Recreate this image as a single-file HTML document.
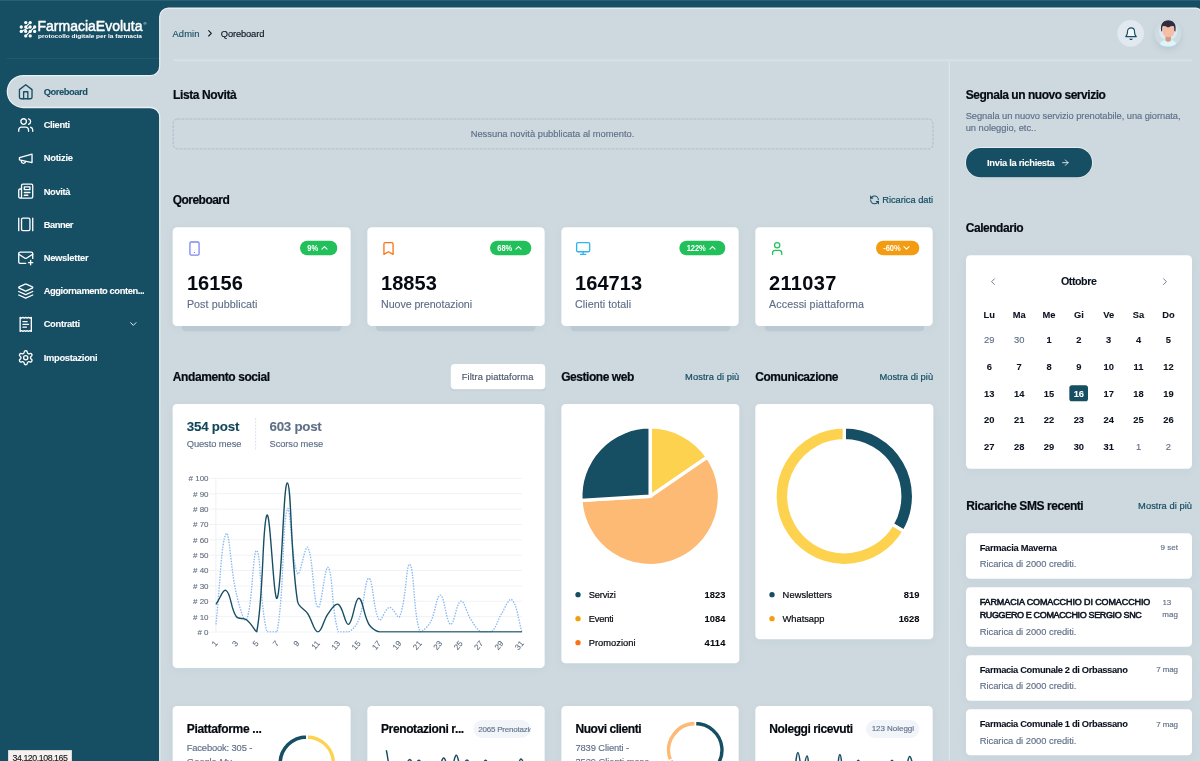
<!DOCTYPE html>
<html lang="it"><head><meta charset="utf-8"><title>Qoreboard - FarmaciaEvoluta</title>
<style>
*{box-sizing:border-box;margin:0;padding:0}
html,body{width:1200px;height:761px;overflow:hidden;background:#164e63}
body{font-family:"Liberation Sans",Arial,sans-serif;color:#0b1220}
#app{filter:opacity(1);position:absolute;left:0;top:0;width:1800px;height:1142px;transform:scale(.6666667);transform-origin:0 0;overflow:hidden;background:#164e63}
.abs,.card,.t,svg.ic{position:absolute}
svg.ic{display:block;overflow:visible}
.t{white-space:nowrap;font-weight:400;-webkit-text-stroke:.2px currentColor}
.t.m{font-weight:700;-webkit-text-stroke:.12px currentColor}
.t.ms{-webkit-text-stroke:.8px currentColor}
.t.m.h{-webkit-text-stroke:.3px currentColor}
.t.l{-webkit-text-stroke:.3px currentColor}
.t.m.big{-webkit-text-stroke:0}
.t.m.mid{-webkit-text-stroke:.15px currentColor}
.t.s2{-webkit-text-stroke:.2px currentColor}
.t.b{font-weight:700}
.t.b.bd{-webkit-text-stroke:0;letter-spacing:-.15px;transform:scaleX(.9);transform-origin:0 50%}
.card{background:#fff;border-radius:6.5px;box-shadow:0 3px 16px rgba(30,60,80,.035)}
.tick{font-size:12px;fill:#5f6b7e;stroke:#5f6b7e;stroke-width:.15px;font-family:"Liberation Sans",Arial,sans-serif}
</style></head>
<body>
<div id="app">
<svg class="abs" style="left:0;top:0" width="1800" height="1142" viewBox="0 0 1800 1142">
<rect x="0" y="0" width="1800" height="1.5" fill="#2a6076"/>
<path d="M1803 1160 V20.1 A9 9 0 0 0 1794 11.1 H252.6 A14 14 0 0 0 238.6 25.1 V99.4 A13 13 0 0 1 225.6 112.4 H34.9 A24.9 24.9 0 0 0 34.9 162.2 H225.6 A13 13 0 0 1 238.6 175.2 V1160 Z" fill="#eaf0f3"/>
<path d="M1801.1 1160 V20.1 A7.1 7.1 0 0 0 1794 13 H252.6 A12.1 12.1 0 0 0 240.5 25.1 V99.4 A14.9 14.9 0 0 1 225.6 114.3 H34.9 A23 23 0 0 0 34.9 160.3 H225.6 A14.9 14.9 0 0 1 240.5 175.2 V1160 Z" fill="#cdd9df"/>
</svg>
<svg class="abs" style="left:28px;top:27px;overflow:visible" width="200" height="36" viewBox="0 0 200 36">
<g fill="#fff">
<circle cx="10.6" cy="6.8" r="2.45"/><circle cx="17.300" cy="6.8" r="2.45"/>
<circle cx="3.9" cy="13.500" r="2.45"/><circle cx="10.6" cy="13.500" r="2.45"/><circle cx="17.300" cy="13.500" r="2.45"/><circle cx="24" cy="13.500" r="2.45"/>
<circle cx="3.9" cy="20.200" r="2.45"/><circle cx="10.6" cy="20.200" r="2.45"/><circle cx="17.300" cy="20.200" r="2.45"/><circle cx="24" cy="20.200" r="2.45"/>
<circle cx="10.6" cy="26.900" r="2.45"/><circle cx="17.300" cy="26.900" r="2.45"/>
</g>
<g stroke="#fff" stroke-width="1.7" stroke-linecap="round"><path d="M17.300 6.8 10.6 13.500M24 13.500 10.6 26.900M17.300 13.500 3.9 20.200"/></g>
<text x="28.300" y="20.200" fill="#fff" stroke="#fff" stroke-width=".75" stroke-linejoin="round" font-family="'Liberation Sans', Arial, sans-serif" font-size="22.6" textLength="157.500" lengthAdjust="spacingAndGlyphs">FarmaciaEvoluta</text>
<text x="187.200" y="10.300" fill="#fff" font-family="'Liberation Sans', Arial, sans-serif" font-size="6.500">®</text>
<text x="29" y="29.300" fill="#fff" font-family="'Liberation Sans', Arial, sans-serif" font-weight="700" font-size="8.9" textLength="156" lengthAdjust="spacingAndGlyphs">protocollo digitale per la farmacia</text>
</svg>
<div class="abs" style="left:10px;top:87.2px;width:229px;height:1.3px;background:rgba(255,255,255,.09)"></div>
<svg class="ic" style="left:25.5px;top:124.88px" width="25.2" height="25.2" viewBox="0 0 24 24" fill="none" stroke="#164e63" stroke-width="1.9" stroke-linecap="round" stroke-linejoin="round"><path d="m3 9 9-7 9 7v11a2 2 0 0 1-2 2H5a2 2 0 0 1-2-2z"/><path d="M9 22V12h6v10"/></svg>
<div class="t m" style="top:127.18px;font-size:14px;line-height:20px;color:#164e63;left:65.55px;letter-spacing:-0.65px;">Qoreboard</div>
<svg class="ic" style="left:25.5px;top:174.74px" width="25.2" height="25.2" viewBox="0 0 24 24" fill="none" stroke="#fff" stroke-width="1.9" stroke-linecap="round" stroke-linejoin="round"><path d="M16 21v-2a4 4 0 0 0-4-4H6a4 4 0 0 0-4 4v2"/><circle cx="9" cy="7" r="4"/><path d="M22 21v-2a4 4 0 0 0-3-3.87"/><path d="M16 3.13a4 4 0 0 1 0 7.75"/></svg>
<div class="t m" style="top:177.03px;font-size:14px;line-height:20px;color:#fff;left:65.55px;letter-spacing:-0.52px;">Clienti</div>
<svg class="ic" style="left:25.5px;top:224.59px" width="25.2" height="25.2" viewBox="0 0 24 24" fill="none" stroke="#fff" stroke-width="1.9" stroke-linecap="round" stroke-linejoin="round"><path d="m3 11 18-5v12L3 14v-3z"/><path d="M11.6 16.8a3 3 0 1 1-5.8-1.6"/></svg>
<div class="t m" style="top:226.9px;font-size:14px;line-height:20px;color:#fff;left:65.55px;letter-spacing:-0.32px;">Notizie</div>
<svg class="ic" style="left:25.5px;top:274.45px" width="25.2" height="25.2" viewBox="0 0 24 24" fill="none" stroke="#fff" stroke-width="1.9" stroke-linecap="round" stroke-linejoin="round"><path d="M4 22h16a2 2 0 0 0 2-2V4a2 2 0 0 0-2-2H8a2 2 0 0 0-2 2v16a2 2 0 0 1-2 2Zm0 0a2 2 0 0 1-2-2v-9c0-1.1.9-2 2-2h2"/><path d="M18 14h-8"/><path d="M15 18h-5"/><path d="M10 6h8v4h-8V6Z"/></svg>
<div class="t m" style="top:276.75px;font-size:14px;line-height:20px;color:#fff;left:65.55px;letter-spacing:-0.51px;">Novità</div>
<svg class="ic" style="left:25.5px;top:324.31px" width="25.2" height="25.2" viewBox="0 0 24 24" fill="none" stroke="#fff" stroke-width="1.9" stroke-linecap="round" stroke-linejoin="round"><path d="M2 3v18"/><rect width="12" height="18" x="6" y="3" rx="2"/><path d="M22 3v18"/></svg>
<div class="t m" style="top:326.62px;font-size:14px;line-height:20px;color:#fff;left:65.55px;letter-spacing:-0.71px;">Banner</div>
<svg class="ic" style="left:25.5px;top:374.18px" width="25.2" height="25.2" viewBox="0 0 24 24" fill="none" stroke="#fff" stroke-width="1.9" stroke-linecap="round" stroke-linejoin="round"><path d="M22 13V6a2 2 0 0 0-2-2H4a2 2 0 0 0-2 2v12c0 1.1.9 2 2 2h8"/><path d="m22 7-8.97 5.7a1.94 1.94 0 0 1-2.06 0L2 7"/><path d="M19 16v6"/><path d="M16 19h6"/></svg>
<div class="t m" style="top:376.48px;font-size:14px;line-height:20px;color:#fff;left:65.55px;letter-spacing:-0.39px;">Newsletter</div>
<svg class="ic" style="left:25.5px;top:424.03px" width="25.2" height="25.2" viewBox="0 0 24 24" fill="none" stroke="#fff" stroke-width="1.9" stroke-linecap="round" stroke-linejoin="round"><path d="m12.83 2.18a2 2 0 0 0-1.66 0L2.6 6.08a1 1 0 0 0 0 1.83l8.58 3.91a2 2 0 0 0 1.66 0l8.58-3.9a1 1 0 0 0 0-1.83Z"/><path d="m22 17.65-9.17 4.16a2 2 0 0 1-1.66 0L2 17.65"/><path d="m22 12.65-9.17 4.16a2 2 0 0 1-1.66 0L2 12.65"/></svg>
<div class="t m" style="top:426.33px;font-size:14px;line-height:20px;color:#fff;left:65.55px;letter-spacing:-0.61px;">Aggiornamento conten...</div>
<svg class="ic" style="left:25.5px;top:473.89px" width="25.2" height="25.2" viewBox="0 0 24 24" fill="none" stroke="#fff" stroke-width="1.9" stroke-linecap="round" stroke-linejoin="round"><path d="M4 2v20l2-1 2 1 2-1 2 1 2-1 2 1 2-1 2 1V2l-2 1-2-1-2 1-2-1-2 1-2-1-2 1Z"/><path d="M14 8H8"/><path d="M16 12H8"/><path d="M13 16H8"/></svg>
<div class="t m" style="top:476.19px;font-size:14px;line-height:20px;color:#fff;left:65.55px;letter-spacing:-0.48px;">Contratti</div>
<svg class="ic" style="left:191.95px;top:478.19px" width="16" height="16" viewBox="0 0 24 24" fill="none" stroke="#fff" stroke-width="2" stroke-linecap="round" stroke-linejoin="round"><path d="m6 9 6 6 6-6"/></svg>
<svg class="ic" style="left:25.5px;top:523.75px" width="25.2" height="25.2" viewBox="0 0 24 24" fill="none" stroke="#fff" stroke-width="1.9" stroke-linecap="round" stroke-linejoin="round"><path d="M12.22 2h-.44a2 2 0 0 0-2 2v.18a2 2 0 0 1-1 1.73l-.43.25a2 2 0 0 1-2 0l-.15-.08a2 2 0 0 0-2.73.73l-.22.38a2 2 0 0 0 .73 2.73l.15.1a2 2 0 0 1 1 1.72v.51a2 2 0 0 1-1 1.74l-.15.09a2 2 0 0 0-.73 2.73l.22.38a2 2 0 0 0 2.73.73l.15-.08a2 2 0 0 1 2 0l.43.25a2 2 0 0 1 1 1.73V20a2 2 0 0 0 2 2h.44a2 2 0 0 0 2-2v-.18a2 2 0 0 1 1-1.73l.43-.25a2 2 0 0 1 2 0l.15.08a2 2 0 0 0 2.73-.73l.22-.39a2 2 0 0 0-.73-2.73l-.15-.08a2 2 0 0 1-1-1.74v-.5a2 2 0 0 1 1-1.74l.15-.09a2 2 0 0 0 .73-2.73l-.22-.38a2 2 0 0 0-2.73-.73l-.15.08a2 2 0 0 1-2 0l-.43-.25a2 2 0 0 1-1-1.73V4a2 2 0 0 0-2-2z"/><circle cx="12" cy="12" r="3"/></svg>
<div class="t m" style="top:526.06px;font-size:14px;line-height:20px;color:#fff;left:65.55px;letter-spacing:-0.43px;">Impostazioni</div>
<div class="t" style="top:40.1px;font-size:14px;line-height:20px;color:#164e63;left:258.75px;letter-spacing:0.16px;">Admin</div>
<svg class="ic" style="left:307px;top:42.25px" width="16" height="16" viewBox="0 0 24 24" fill="none" stroke="#0f172a" stroke-width="2.4" stroke-linecap="round" stroke-linejoin="round"><path d="m9 18 6-6-6-6"/></svg>
<div class="t" style="top:40.1px;font-size:14px;line-height:20px;color:#0b1220;left:331.2px;letter-spacing:-0.2px;">Qoreboard</div>
<div class="abs" style="left:1676.25px;top:30px;width:40.01px;height:40.01px;border-radius:50%;background:#e2e8f0"></div>
<svg class="ic" style="left:1685.7px;top:39.75px" width="21" height="21" viewBox="0 0 24 24" fill="rgba(255,255,255,.6)" stroke="#164e63" stroke-width="1.9" stroke-linecap="round" stroke-linejoin="round"><path d="M6 8a6 6 0 0 1 12 0c0 7 3 9 3 9H3s3-2 3-9"/><path d="M10.3 21a1.94 1.94 0 0 0 3.4 0"/></svg>
<div class="abs" style="left:1731.77px;top:30px;width:40px;height:40px;border-radius:50%;box-shadow:0 5px 10px rgba(40,60,80,.1);overflow:hidden">
<svg width="40" height="40" viewBox="0 0 40 40" style="display:block"><rect width="40" height="40" fill="#cfdbe1"/><circle cx="20.300" cy="17" r="13.800" fill="#d9eaf1"/>
<path d="M6.500 40c.5-6.500 5-10.500 13.800-10.500s13.300 4 13.800 10.500z" fill="#d8f6fb"/>
<path d="M16.200 23.500h8.200v7.200c-2 2.700-6.200 2.700-8.200 0z" fill="#d9987c"/>
<path d="M11.900 7.500h17.500v10.200c0 10.800-17.500 10.800-17.500 0z" fill="#f3bda6"/>
<path d="M10 17.500C7.800 6 12.500.2 20.500.2S33.200 6 31 17.500l-1.700-1.500c.3-2.500.1-4.700-.6-6.700-2.400-.5-5-.2-7.200 1.400h-2.400c-2.200-1.600-4.800-1.900-7.200-1.400-.7 2-.9 4.200-.6 6.700z" fill="#2f2d3e"/>
</svg></div>
<div class="abs" style="left:259.500px;top:88.700px;width:1528.500px;height:3px;background:rgba(255,255,255,.2)"></div>
<div class="abs" style="left:1423.400px;top:91.700px;width:1.7px;height:1060px;background:rgba(255,255,255,.3)"></div>
<div class="t m h" style="top:128.9px;font-size:18px;line-height:26px;color:#060a12;left:259.5px;letter-spacing:-0.59px;">Lista Novità</div>
<svg class="abs" style="left:0;top:0" width="1800" height="1142" viewBox="0 0 1800 1142"><rect x="259.8" y="178.57" width="1139.7" height="44.85" rx="6.500" fill="none" stroke="#a6b6c6" stroke-width="1.2" stroke-dasharray="4.2 1.8"/></svg>
<div class="t" style="top:191px;font-size:14px;line-height:20px;color:#5e6e87;left:828.75px;transform:translateX(-50%);letter-spacing:0.01px;">Nessuna novità pubblicata al momento.</div>
<div class="t m h" style="top:286.7px;font-size:18px;line-height:26px;color:#060a12;left:259.2px;letter-spacing:-0.82px;">Qoreboard</div>
<svg class="ic" style="left:1303.55px;top:292.25px" width="15.5" height="15.5" viewBox="0 0 24 24" fill="none" stroke="#164e63" stroke-width="2.4" stroke-linecap="round" stroke-linejoin="round"><path d="M21 12a9 9 0 0 0-9-9 9.75 9.75 0 0 0-6.74 2.74L3 8"/><path d="M3 3v5h5"/><path d="M3 12a9 9 0 0 0 9 9 9.75 9.75 0 0 0 6.740-2.740L21 16"/><path d="M16 16h5v5"/></svg>
<div class="t l" style="top:290px;font-size:14px;line-height:20px;color:#164e63;right:400.41px;letter-spacing:-0.06px;">Ricarica dati</div>
<div class="abs" style="left:273.3px;top:450px;width:238.95px;height:46.95px;background:#bfccd5;border-radius:0 0 6px 6px"></div>
<div class="card" style="left:259.35px;top:340.5px;width:266.85px;height:148.8px;"></div>
<svg class="ic" style="left:280.3px;top:360.85px" width="23.5" height="23.5" viewBox="0 0 24 24" fill="none" stroke="#7b86f5" stroke-width="2" stroke-linecap="round" stroke-linejoin="round"><rect width="14" height="20" x="5" y="2" rx="2" ry="2"/><path d="M12 18h.01"/></svg>
<div class="abs" style="left:450px;top:361.2px;width:55.8px;height:21.45px;border-radius:11px;background:#22c05b"></div>
<div class="t b bd" style="top:363px;font-size:12.6px;line-height:18px;color:#fff;left:460.95px;">9%</div>
<svg class="ic" style="left:478.7px;top:364.17px" width="15.5" height="15.5" viewBox="0 0 24 24" fill="none" stroke="#fff" stroke-width="2.5" stroke-linecap="round" stroke-linejoin="round"><path d="m18 15-6-6-6 6"/></svg>
<div class="t m big" style="top:408.65px;font-size:30px;line-height:32px;color:#060a12;left:280.35px;letter-spacing:0.11px;">16156</div>
<div class="t" style="top:445.4px;font-size:16px;line-height:23px;color:#5e6e87;left:280.35px;letter-spacing:0.13px;">Post pubblicati</div>
<div class="abs" style="left:564.45px;top:450px;width:238.95px;height:46.95px;background:#bfccd5;border-radius:0 0 6px 6px"></div>
<div class="card" style="left:550.5px;top:340.5px;width:266.85px;height:148.8px;"></div>
<svg class="ic" style="left:571.45px;top:360.85px" width="23.5" height="23.5" viewBox="0 0 24 24" fill="none" stroke="#f97316" stroke-width="2" stroke-linecap="round" stroke-linejoin="round"><path d="m19 21-7-4-7 4V5a2 2 0 0 1 2-2h10a2 2 0 0 1 2 2v16z"/></svg>
<div class="abs" style="left:734.55px;top:361.2px;width:62.4px;height:21.45px;border-radius:11px;background:#22c05b"></div>
<div class="t b bd" style="top:363px;font-size:12.6px;line-height:18px;color:#fff;left:745.5px;">68%</div>
<svg class="ic" style="left:769.85px;top:364.17px" width="15.5" height="15.5" viewBox="0 0 24 24" fill="none" stroke="#fff" stroke-width="2.5" stroke-linecap="round" stroke-linejoin="round"><path d="m18 15-6-6-6 6"/></svg>
<div class="t m big" style="top:408.65px;font-size:30px;line-height:32px;color:#060a12;left:571.5px;letter-spacing:0.05px;">18853</div>
<div class="t" style="top:445.4px;font-size:16px;line-height:23px;color:#5e6e87;left:571.5px;letter-spacing:-0.08px;">Nuove prenotazioni</div>
<div class="abs" style="left:855.6px;top:450px;width:238.95px;height:46.95px;background:#bfccd5;border-radius:0 0 6px 6px"></div>
<div class="card" style="left:841.65px;top:340.5px;width:266.85px;height:148.8px;"></div>
<svg class="ic" style="left:862.6px;top:360.85px" width="23.5" height="23.5" viewBox="0 0 24 24" fill="none" stroke="#2fb4f0" stroke-width="2" stroke-linecap="round" stroke-linejoin="round"><rect width="20" height="14" x="2" y="3" rx="2"/><line x1="8" x2="16" y1="21" y2="21"/><line x1="12" x2="12" y1="17" y2="21"/></svg>
<div class="abs" style="left:1018.8px;top:361.2px;width:69.3px;height:21.45px;border-radius:11px;background:#22c05b"></div>
<div class="t b bd" style="top:363px;font-size:12.6px;line-height:18px;color:#fff;left:1029.75px;">122%</div>
<svg class="ic" style="left:1061px;top:364.17px" width="15.5" height="15.5" viewBox="0 0 24 24" fill="none" stroke="#fff" stroke-width="2.5" stroke-linecap="round" stroke-linejoin="round"><path d="m18 15-6-6-6 6"/></svg>
<div class="t m big" style="top:408.65px;font-size:30px;line-height:32px;color:#060a12;left:862.65px;letter-spacing:0.07px;">164713</div>
<div class="t" style="top:445.4px;font-size:16px;line-height:23px;color:#5e6e87;left:862.65px;letter-spacing:0.09px;">Clienti totali</div>
<div class="abs" style="left:1146.6px;top:450px;width:238.95px;height:46.95px;background:#bfccd5;border-radius:0 0 6px 6px"></div>
<div class="card" style="left:1132.65px;top:340.5px;width:266.85px;height:148.8px;"></div>
<svg class="ic" style="left:1153.6px;top:360.85px" width="23.5" height="23.5" viewBox="0 0 24 24" fill="none" stroke="#22c55e" stroke-width="2" stroke-linecap="round" stroke-linejoin="round"><path d="M19 21v-2a4 4 0 0 0-4-4H9a4 4 0 0 0-4 4v2"/><circle cx="12" cy="7" r="4"/></svg>
<div class="abs" style="left:1313.7px;top:361.2px;width:65.4px;height:21.45px;border-radius:11px;background:#f39c12"></div>
<div class="t b bd" style="top:363px;font-size:12.6px;line-height:18px;color:#fff;left:1324.65px;">-60%</div>
<svg class="ic" style="left:1352px;top:364.17px" width="15.5" height="15.5" viewBox="0 0 24 24" fill="none" stroke="#fff" stroke-width="2.5" stroke-linecap="round" stroke-linejoin="round"><path d="m6 9 6 6 6-6"/></svg>
<div class="t m big" style="top:408.65px;font-size:30px;line-height:32px;color:#060a12;left:1153.65px;letter-spacing:0.47px;">211037</div>
<div class="t" style="top:445.4px;font-size:16px;line-height:23px;color:#5e6e87;left:1153.65px;letter-spacing:0.15px;">Accessi piattaforma</div>
<div class="t m h" style="top:552.05px;font-size:18px;line-height:26px;color:#060a12;left:259.2px;letter-spacing:-0.6px;">Andamento social</div>
<div class="abs" style="left:675.75px;top:546px;width:141.75px;height:38.4px;background:#fff;border-radius:6px;box-shadow:0 1px 2px rgba(0,0,0,.04)"></div>
<div class="t s2" style="top:555.12px;font-size:14px;line-height:20px;color:#475569;left:692.62px;letter-spacing:0.14px;">Filtra piattaforma</div>
<div class="t m h" style="top:552.05px;font-size:18px;line-height:26px;color:#060a12;left:841.88px;letter-spacing:-0.69px;">Gestione web</div>
<div class="t l" style="top:555.2px;font-size:14px;line-height:20px;color:#164e63;right:690.95px;letter-spacing:0.1px;">Mostra di più</div>
<div class="t m h" style="top:552.05px;font-size:18px;line-height:26px;color:#060a12;left:1132.8px;letter-spacing:-0.68px;">Comunicazione</div>
<div class="t l" style="top:555.2px;font-size:14px;line-height:20px;color:#164e63;right:400.32px;letter-spacing:0.03px;">Mostra di più</div>
<div class="card" style="left:259.35px;top:606px;width:557.85px;height:396px;"></div>
<div class="card" style="left:841.65px;top:606px;width:267px;height:388.95px;"></div>
<div class="card" style="left:1132.65px;top:606px;width:267px;height:353.25px;"></div>
<div class="t m mid" style="top:625.7px;font-size:20px;line-height:29px;color:#11465a;left:280.05px;letter-spacing:-0.3px;">354 post</div>
<div class="t" style="top:656.15px;font-size:14px;line-height:20px;color:#5e6e87;left:280.05px;letter-spacing:-0.11px;">Questo mese</div>
<div class="abs" style="left:382.5px;top:626.55px;width:0;height:47.25px;border-left:1.4px dashed #c5d2e2"></div>
<div class="t m mid" style="top:625.7px;font-size:20px;line-height:29px;color:#5e6e87;left:404.25px;letter-spacing:-0.39px;">603 post</div>
<div class="t" style="top:656.15px;font-size:14px;line-height:20px;color:#5e6e87;left:404.25px;letter-spacing:-0.12px;">Scorso mese</div>
<div class="card" style="left:259.35px;top:1059px;width:266.85px;height:126px;"></div>
<div class="card" style="left:550.5px;top:1059px;width:266.85px;height:126px;"></div>
<div class="card" style="left:841.65px;top:1059px;width:266.85px;height:126px;"></div>
<div class="card" style="left:1132.65px;top:1059px;width:266.85px;height:126px;"></div>
<svg class="abs" style="left:0;top:0" width="1800" height="1142" viewBox="0 0 1800 1142"><line x1="314.85" y1="948" x2="783" y2="948" stroke="#f1f2f5" stroke-width="1.5"/>
<text x="312.85" y="952.3" text-anchor="end" class="tick"># 0</text>
<line x1="314.85" y1="924.95" x2="783" y2="924.95" stroke="#f1f2f5" stroke-width="1.5"/>
<text x="312.85" y="929.25" text-anchor="end" class="tick"># 10</text>
<line x1="314.85" y1="901.9" x2="783" y2="901.9" stroke="#f1f2f5" stroke-width="1.5"/>
<text x="312.85" y="906.2" text-anchor="end" class="tick"># 20</text>
<line x1="314.85" y1="878.86" x2="783" y2="878.86" stroke="#f1f2f5" stroke-width="1.5"/>
<text x="312.85" y="883.16" text-anchor="end" class="tick"># 30</text>
<line x1="314.85" y1="855.81" x2="783" y2="855.81" stroke="#f1f2f5" stroke-width="1.5"/>
<text x="312.85" y="860.11" text-anchor="end" class="tick"># 40</text>
<line x1="314.85" y1="832.76" x2="783" y2="832.76" stroke="#f1f2f5" stroke-width="1.5"/>
<text x="312.85" y="837.06" text-anchor="end" class="tick"># 50</text>
<line x1="314.85" y1="809.72" x2="783" y2="809.72" stroke="#f1f2f5" stroke-width="1.5"/>
<text x="312.85" y="814.01" text-anchor="end" class="tick"># 60</text>
<line x1="314.85" y1="786.67" x2="783" y2="786.67" stroke="#f1f2f5" stroke-width="1.5"/>
<text x="312.85" y="790.97" text-anchor="end" class="tick"># 70</text>
<line x1="314.85" y1="763.62" x2="783" y2="763.62" stroke="#f1f2f5" stroke-width="1.5"/>
<text x="312.85" y="767.92" text-anchor="end" class="tick"># 80</text>
<line x1="314.85" y1="740.57" x2="783" y2="740.57" stroke="#f1f2f5" stroke-width="1.5"/>
<text x="312.85" y="744.87" text-anchor="end" class="tick"># 90</text>
<line x1="314.85" y1="717.53" x2="783" y2="717.53" stroke="#f1f2f5" stroke-width="1.5"/>
<text x="312.85" y="721.83" text-anchor="end" class="tick"># 100</text>
<line x1="323.85" y1="717.53" x2="323.85" y2="948" stroke="#eef0f3" stroke-width="1.5"/>
<text transform="translate(327.35 965.5) rotate(-50)" text-anchor="end" class="tick">1</text>
<text transform="translate(357.96 965.5) rotate(-50)" text-anchor="end" class="tick">3</text>
<text transform="translate(388.57 965.5) rotate(-50)" text-anchor="end" class="tick">5</text>
<text transform="translate(419.18 965.5) rotate(-50)" text-anchor="end" class="tick">7</text>
<text transform="translate(449.79 965.5) rotate(-50)" text-anchor="end" class="tick">9</text>
<text transform="translate(480.4 965.5) rotate(-50)" text-anchor="end" class="tick">11</text>
<text transform="translate(511.01 965.5) rotate(-50)" text-anchor="end" class="tick">13</text>
<text transform="translate(541.62 965.5) rotate(-50)" text-anchor="end" class="tick">15</text>
<text transform="translate(572.23 965.5) rotate(-50)" text-anchor="end" class="tick">17</text>
<text transform="translate(602.84 965.5) rotate(-50)" text-anchor="end" class="tick">19</text>
<text transform="translate(633.45 965.5) rotate(-50)" text-anchor="end" class="tick">21</text>
<text transform="translate(664.06 965.5) rotate(-50)" text-anchor="end" class="tick">23</text>
<text transform="translate(694.67 965.5) rotate(-50)" text-anchor="end" class="tick">25</text>
<text transform="translate(725.28 965.5) rotate(-50)" text-anchor="end" class="tick">27</text>
<text transform="translate(755.89 965.5) rotate(-50)" text-anchor="end" class="tick">29</text>
<text transform="translate(786.5 965.5) rotate(-50)" text-anchor="end" class="tick">31</text>
<clipPath id="ca"><rect x="322.85" y="715.53" width="461.15" height="233.17"/></clipPath>
<g clip-path="url(#ca)">
<path d="M323.85 936.48 C329.97 882.08 331.81 811.56 339.16 800.50 C344.05 793.12 346.08 855.05 354.46 890.38 C358.33 906.68 366.26 936.95 369.76 929.56 C378.50 911.14 379.44 822.46 385.07 825.85 C391.68 829.83 389.48 904.54 400.38 948.00 C401.73 948.00 414.74 948.00 415.68 948.00 C426.99 879.88 422.98 786.52 430.99 763.62 C435.22 751.49 437.72 844.29 446.29 860.42 C449.97 867.34 457.73 814.84 461.60 821.24 C469.97 835.12 469.60 903.98 476.90 911.12 C481.85 915.97 487.47 845.49 492.21 851.20 C499.71 860.24 496.92 914.51 507.51 948.00 C509.16 948.00 518.04 948.00 522.82 948.00 C530.29 943.50 534.79 938.34 538.12 929.56 C547.03 906.08 547.30 867.33 553.42 867.33 C559.55 867.33 559.82 916.81 568.73 929.56 C572.06 934.33 577.46 912.11 584.04 911.12 C589.70 910.27 596.83 930.25 599.34 924.95 C609.07 904.44 609.29 842.56 614.64 846.59 C621.53 851.77 619.76 918.83 629.95 948.00 C632.00 948.00 641.36 941.21 645.25 934.17 C653.60 919.08 654.58 892.24 660.56 892.69 C666.83 893.16 669.12 934.44 675.87 936.48 C681.36 938.13 684.50 903.41 691.17 901.90 C696.75 900.65 699.51 919.07 706.48 929.56 C711.75 937.51 714.31 943.50 721.78 948.00 C726.55 948.00 733.09 948.00 737.09 948.00 C745.33 940.55 745.65 931.01 752.39 920.34 C757.89 911.65 763.57 895.87 767.69 899.60 C775.82 906.94 776.88 928.64 783.00 948.00" fill="none" stroke="#86b8f1" stroke-width="2" stroke-dasharray="2.2 1.9"/>
<path d="M323.85 906.51 C329.97 898.22 334.50 882.97 339.16 885.77 C346.75 890.34 345.59 912.26 354.46 924.95 C357.83 929.78 364.87 925.87 369.76 929.56 C377.11 935.09 383.60 948.00 385.07 948.00 C395.85 892.83 393.23 784.68 400.38 772.84 C405.47 764.40 410.54 905.42 415.68 897.30 C422.79 886.06 424.94 723.53 430.99 724.44 C437.19 725.37 435.50 832.84 446.29 901.90 C447.74 911.20 456.32 912.39 461.60 920.34 C468.56 930.83 470.78 948.00 476.90 948.00 C483.02 948.00 484.80 930.38 492.21 920.34 C497.04 913.79 502.86 904.06 507.51 906.51 C515.10 910.52 517.37 938.12 522.82 936.48 C529.62 934.43 532.00 897.30 538.12 897.30 C544.24 897.30 545.01 922.54 553.42 936.48 C557.26 942.82 561.92 945.44 568.73 948.00 C574.17 948.00 577.91 948.00 584.04 948.00 C590.16 948.00 593.22 948.00 599.34 948.00 C605.46 948.00 608.52 948.00 614.64 948.00 C620.77 948.00 623.83 948.00 629.95 948.00 C636.07 948.00 639.13 948.00 645.25 948.00 C651.38 948.00 654.44 948.00 660.56 948.00 C666.68 948.00 669.74 948.00 675.87 948.00 C681.99 948.00 685.05 948.00 691.17 948.00 C697.29 948.00 700.35 948.00 706.48 948.00 C712.60 948.00 715.66 948.00 721.78 948.00 C727.90 948.00 730.96 948.00 737.09 948.00 C743.21 948.00 746.27 948.00 752.39 948.00 C758.51 948.00 761.57 948.00 767.69 948.00 C773.82 948.00 776.88 948.00 783.00 948.00" fill="none" stroke="#164e63" stroke-width="2.1" stroke-linejoin="round"/>
</g>
<path d="M975.22 744.38 L975.22 640.38 A104.00 104.00 0 0 1 1061.02 685.59 Z" fill="#fcd24f" stroke="#fff" stroke-width="5" stroke-linejoin="miter"/>
<path d="M975.22 744.38 L1061.02 685.59 A104.00 104.00 0 1 1 871.42 750.68 Z" fill="#fdba74" stroke="#fff" stroke-width="5" stroke-linejoin="miter"/>
<path d="M975.22 744.38 L871.42 750.68 A104.00 104.00 0 0 1 975.22 640.38 Z" fill="#164e63" stroke="#fff" stroke-width="5" stroke-linejoin="miter"/>
<path d="M1266.45 640.38 A104.00 104.00 0 0 1 1356.07 797.14 L1338.14 786.59 A83.20 83.20 0 0 0 1266.45 661.17 Z" fill="#164e63" stroke="#fff" stroke-width="5" stroke-linejoin="miter"/>
<path d="M1356.07 797.14 A104.00 104.00 0 1 1 1266.45 640.38 L1266.45 661.17 A83.20 83.20 0 1 0 1338.14 786.59 Z" fill="#fcd24f" stroke="#fff" stroke-width="5" stroke-linejoin="miter"/>
<path d="M460.35 1101.60 A43.80 43.80 0 1 1 459.21 1189.19 L459.41 1181.59 A36.20 36.20 0 1 0 460.35 1109.20 Z" fill="#fcd24f" stroke="#fff" stroke-width="2.5" stroke-linejoin="miter"/>
<path d="M459.21 1189.19 A43.80 43.80 0 0 1 460.35 1101.60 L460.35 1109.20 A36.20 36.20 0 0 0 459.41 1181.59 Z" fill="#164e63" stroke="#fff" stroke-width="2.5" stroke-linejoin="miter"/>
<path d="M1042.95 1081.50 A43.80 43.80 0 1 1 1002.27 1141.53 L1009.33 1138.72 A36.20 36.20 0 1 0 1042.95 1089.10 Z" fill="#164e63" stroke="#fff" stroke-width="2.5" stroke-linejoin="miter"/>
<path d="M1002.27 1141.53 A43.80 43.80 0 0 1 1042.95 1081.50 L1042.95 1089.10 A36.20 36.20 0 0 0 1009.33 1138.72 Z" fill="#fdba74" stroke="#fff" stroke-width="2.5" stroke-linejoin="miter"/>
<path d="M579.45 1125.45 C582.39 1136.67 581.15 1145.79 586.80 1153.50 C589.37 1157.01 595.02 1154.58 600.00 1153.50 C603.30 1152.78 605.05 1151.40 607.50 1149.00 C610.87 1145.70 611.58 1139.57 614.55 1139.25 C617.22 1138.97 618.68 1147.25 621.60 1147.50 C624.26 1147.73 625.96 1139.92 628.50 1140.45 C631.72 1141.12 631.95 1148.15 636.00 1150.50 C640.95 1153.37 645.11 1153.50 651.00 1153.50 C654.11 1153.50 656.47 1152.78 658.50 1150.50 C662.29 1146.24 662.71 1137.15 665.55 1137.15 C668.41 1137.15 669.09 1147.01 672.75 1150.50 C674.07 1151.75 676.88 1150.69 678.00 1149.00 C681.56 1143.61 681.77 1132.80 684.45 1132.80 C687.17 1132.80 687.76 1147.29 691.50 1149.00 C694.18 1150.23 697.06 1140.15 700.50 1140.15 C703.66 1140.15 704.12 1147.36 708.00 1149.00 C712.52 1150.90 716.99 1150.88 721.50 1149.00 C725.21 1147.46 725.86 1140.17 728.55 1140.45 C731.56 1140.77 731.58 1148.62 735.75 1150.50 C743.16 1153.84 748.78 1153.16 757.50 1153.50 C764.08 1153.76 769.05 1155.12 774.00 1152.00 C778.65 1149.06 778.50 1138.35 781.50 1138.35 C784.50 1138.35 784.98 1147.94 789.00 1152.00 C790.98 1154.00 793.50 1152.90 796.50 1153.50" fill="none" stroke="#164e63" stroke-width="2.2"/>
<path d="M1182.00 1158.00 C1185.18 1158.00 1188.71 1160.45 1189.95 1158.00 C1194.65 1148.75 1194.09 1128.75 1196.85 1128.75 C1199.61 1128.75 1200.76 1156.82 1203.75 1158.00 C1206.22 1158.98 1207.77 1134.15 1210.50 1134.15 C1213.23 1134.15 1211.43 1152.73 1217.40 1158.00 C1222.23 1162.27 1229.46 1158.00 1237.50 1158.00 C1243.68 1158.00 1249.71 1161.81 1252.95 1158.00 C1258.65 1151.31 1257.09 1131.75 1259.85 1131.75 C1262.61 1131.75 1261.42 1152.79 1266.75 1158.00 C1269.70 1160.89 1276.20 1155.72 1280.55 1152.00 C1284.48 1148.64 1284.69 1140.30 1287.45 1140.30 C1290.21 1140.30 1289.86 1149.97 1294.35 1152.00 C1302.88 1155.85 1309.83 1155.00 1320.00 1155.00 C1324.53 1155.00 1327.80 1154.70 1331.10 1152.00 C1335.00 1148.82 1335.24 1140.30 1338.00 1140.30 C1340.76 1140.30 1340.85 1149.57 1344.90 1152.00 C1348.65 1154.25 1354.33 1154.78 1357.50 1152.00 C1362.19 1147.88 1361.76 1134.75 1364.55 1134.75 C1367.34 1134.75 1367.49 1146.05 1371.45 1152.00 C1373.67 1155.35 1376.58 1155.60 1380.00 1158.00" fill="none" stroke="#164e63" stroke-width="2.2"/></svg>
<div class="abs" style="left:862.65px;top:887.93px;width:8.1px;height:8.1px;border-radius:50%;background:#164e63"></div>
<div class="t l" style="top:881.9px;font-size:14px;line-height:20px;color:#05080f;left:883.05px;letter-spacing:-0.24px;">Servizi</div>
<div class="t m" style="top:881.9px;font-size:14px;line-height:20px;color:#05080f;right:711.78px;letter-spacing:0.12px;">1823</div>
<div class="abs" style="left:862.65px;top:923.85px;width:8.1px;height:8.1px;border-radius:50%;background:#f59e0b"></div>
<div class="t l" style="top:917.82px;font-size:14px;line-height:20px;color:#05080f;left:883.05px;letter-spacing:-0.31px;">Eventi</div>
<div class="t m" style="top:917.82px;font-size:14px;line-height:20px;color:#05080f;right:711.78px;letter-spacing:0.12px;">1084</div>
<div class="abs" style="left:862.65px;top:959.78px;width:8.1px;height:8.1px;border-radius:50%;background:#f97316"></div>
<div class="t l" style="top:953.75px;font-size:14px;line-height:20px;color:#05080f;left:883.05px;letter-spacing:0.02px;">Promozioni</div>
<div class="t m" style="top:953.75px;font-size:14px;line-height:20px;color:#05080f;right:711.58px;letter-spacing:0.32px;">4114</div>
<div class="abs" style="left:1153.5px;top:887.93px;width:8.1px;height:8.1px;border-radius:50%;background:#164e63"></div>
<div class="t l" style="top:881.9px;font-size:14px;line-height:20px;color:#05080f;left:1173.9px;letter-spacing:0.1px;">Newsletters</div>
<div class="t m" style="top:881.9px;font-size:14px;line-height:20px;color:#05080f;right:420.79px;letter-spacing:0.11px;">819</div>
<div class="abs" style="left:1153.5px;top:923.85px;width:8.1px;height:8.1px;border-radius:50%;background:#f59e0b"></div>
<div class="t l" style="top:917.82px;font-size:14px;line-height:20px;color:#05080f;left:1173.9px;letter-spacing:-0.06px;">Whatsapp</div>
<div class="t m" style="top:917.82px;font-size:14px;line-height:20px;color:#05080f;right:420.89px;letter-spacing:0.01px;">1628</div>
<div class="t m h" style="top:1080.35px;font-size:18px;line-height:26px;color:#060a12;left:280.05px;letter-spacing:-0.46px;">Piattaforme ...</div>
<div class="t" style="top:1111.4px;font-size:14px;line-height:20px;color:#5e6e87;left:280.05px;letter-spacing:-0.2px;">Facebook: 305 -</div>
<div class="t" style="top:1131.5px;font-size:14px;line-height:20px;color:#5e6e87;left:280.05px;">Google My</div>
<div class="t m h" style="top:1080.35px;font-size:18px;line-height:26px;color:#060a12;left:571.5px;letter-spacing:-0.58px;">Prenotazioni r...</div>
<div class="abs" style="left:709.65px;top:1080px;width:86.85px;height:27px;border-radius:14px;background:#f1f5f9;overflow:hidden"><div class="t" style="left:7.8px;top:4.5px;font-size:12px;line-height:18px;color:#64748b;letter-spacing:-.32px">2065 Prenotazioni</div></div>
<div class="t m h" style="top:1080.35px;font-size:18px;line-height:26px;color:#060a12;left:863.1px;letter-spacing:-0.65px;">Nuovi clienti</div>
<div class="t" style="top:1111.4px;font-size:14px;line-height:20px;color:#5e6e87;left:863.1px;letter-spacing:-0.14px;">7839 Clienti -</div>
<div class="t" style="top:1131.5px;font-size:14px;line-height:20px;color:#5e6e87;left:863.1px;letter-spacing:-0.07px;">3529 Clienti mese</div>
<div class="t m h" style="top:1080.35px;font-size:18px;line-height:26px;color:#060a12;left:1153.95px;letter-spacing:-0.62px;">Noleggi ricevuti</div>
<div class="abs" style="left:1299px;top:1080px;width:79.65px;height:27px;border-radius:14px;background:#f1f5f9"></div>
<div class="t" style="top:1085px;font-size:12px;line-height:17px;color:#5e6e87;left:1307.55px;letter-spacing:-0.06px;">123 Noleggi</div>
<div class="t m h" style="top:129.2px;font-size:18px;line-height:26px;color:#060a12;left:1448.55px;letter-spacing:-0.7px;">Segnala un nuovo servizio</div>
<div class="t" style="top:162.5px;font-size:14px;line-height:20px;color:#5e6e87;left:1448.55px;letter-spacing:-0.09px;">Segnala un nuovo servizio prenotabile, una giornata,</div>
<div class="t" style="top:182.3px;font-size:14px;line-height:20px;color:#5e6e87;left:1448.55px;letter-spacing:-0.05px;">un noleggio, etc..</div>
<div class="abs" style="left:1448.55px;top:222.15px;width:189.9px;height:44.25px;border-radius:23px;background:#164e63;box-shadow:0 0 0 1.4px rgba(255,255,255,.5),0 2px 3px rgba(0,0,0,.06)"></div>
<div class="t m" style="top:234.12px;font-size:14px;line-height:20px;color:#fff;left:1480.5px;letter-spacing:-0.43px;">Invia la richiesta</div>
<svg class="ic" style="left:1591.4px;top:237.35px" width="14" height="14" viewBox="0 0 24 24" fill="none" stroke="#fff" stroke-width="2.1" stroke-linecap="round" stroke-linejoin="round"><path d="M5 12h14"/><path d="m12 5 7 7-7 7"/></svg>
<div class="t m h" style="top:329px;font-size:18px;line-height:26px;color:#060a12;left:1448.55px;letter-spacing:-0.68px;">Calendario</div>
<div class="card" style="left:1449.45px;top:382.5px;width:338.55px;height:320.4px;"></div>
<svg class="ic" style="left:1481px;top:414.2px" width="17" height="17" viewBox="0 0 24 24" fill="none" stroke="#5e6e87" stroke-width="1.9" stroke-linecap="round" stroke-linejoin="round"><path d="m15 18-6-6 6-6"/></svg>
<svg class="ic" style="left:1738.55px;top:414.2px" width="17" height="17" viewBox="0 0 24 24" fill="none" stroke="#5e6e87" stroke-width="1.9" stroke-linecap="round" stroke-linejoin="round"><path d="m9 18 6-6-6-6"/></svg>
<div class="t m" style="top:411.35px;font-size:16px;line-height:23px;color:#0b1220;left:1618.03px;transform:translateX(-50%);letter-spacing:-0.65px;">Ottobre</div>
<div class="t m" style="top:462.2px;font-size:14px;line-height:20px;color:#0b1220;left:1483.95px;transform:translateX(-50%);">Lu</div>
<div class="t m" style="top:462.2px;font-size:14px;line-height:20px;color:#0b1220;left:1528.72px;transform:translateX(-50%);">Ma</div>
<div class="t m" style="top:462.2px;font-size:14px;line-height:20px;color:#0b1220;left:1573.5px;transform:translateX(-50%);">Me</div>
<div class="t m" style="top:462.2px;font-size:14px;line-height:20px;color:#0b1220;left:1618.27px;transform:translateX(-50%);">Gi</div>
<div class="t m" style="top:462.2px;font-size:14px;line-height:20px;color:#0b1220;left:1663.05px;transform:translateX(-50%);">Ve</div>
<div class="t m" style="top:462.2px;font-size:14px;line-height:20px;color:#0b1220;left:1707.82px;transform:translateX(-50%);">Sa</div>
<div class="t m" style="top:462.2px;font-size:14px;line-height:20px;color:#0b1220;left:1752.6px;transform:translateX(-50%);">Do</div>
<div class="abs" style="left:1604.25px;top:578.25px;width:28.2px;height:23.85px;border-radius:4px;background:#164e63"></div>
<div class="t" style="top:500px;font-size:14px;line-height:20px;color:#5e6e87;left:1483.95px;transform:translateX(-50%);">29</div>
<div class="t" style="top:500px;font-size:14px;line-height:20px;color:#5e6e87;left:1528.72px;transform:translateX(-50%);">30</div>
<div class="t m" style="top:500px;font-size:14px;line-height:20px;color:#0b1220;left:1573.5px;transform:translateX(-50%);">1</div>
<div class="t m" style="top:500px;font-size:14px;line-height:20px;color:#0b1220;left:1618.27px;transform:translateX(-50%);">2</div>
<div class="t m" style="top:500px;font-size:14px;line-height:20px;color:#0b1220;left:1663.05px;transform:translateX(-50%);">3</div>
<div class="t m" style="top:500px;font-size:14px;line-height:20px;color:#0b1220;left:1707.82px;transform:translateX(-50%);">4</div>
<div class="t m" style="top:500px;font-size:14px;line-height:20px;color:#0b1220;left:1752.6px;transform:translateX(-50%);">5</div>
<div class="t m" style="top:539.9px;font-size:14px;line-height:20px;color:#0b1220;left:1483.95px;transform:translateX(-50%);">6</div>
<div class="t m" style="top:539.9px;font-size:14px;line-height:20px;color:#0b1220;left:1528.72px;transform:translateX(-50%);">7</div>
<div class="t m" style="top:539.9px;font-size:14px;line-height:20px;color:#0b1220;left:1573.5px;transform:translateX(-50%);">8</div>
<div class="t m" style="top:539.9px;font-size:14px;line-height:20px;color:#0b1220;left:1618.27px;transform:translateX(-50%);">9</div>
<div class="t m" style="top:539.9px;font-size:14px;line-height:20px;color:#0b1220;left:1663.05px;transform:translateX(-50%);">10</div>
<div class="t m" style="top:539.9px;font-size:14px;line-height:20px;color:#0b1220;left:1707.82px;transform:translateX(-50%);">11</div>
<div class="t m" style="top:539.9px;font-size:14px;line-height:20px;color:#0b1220;left:1752.6px;transform:translateX(-50%);">12</div>
<div class="t m" style="top:579.8px;font-size:14px;line-height:20px;color:#0b1220;left:1483.95px;transform:translateX(-50%);">13</div>
<div class="t m" style="top:579.8px;font-size:14px;line-height:20px;color:#0b1220;left:1528.72px;transform:translateX(-50%);">14</div>
<div class="t m" style="top:579.8px;font-size:14px;line-height:20px;color:#0b1220;left:1573.5px;transform:translateX(-50%);">15</div>
<div class="t m" style="top:579.8px;font-size:14px;line-height:20px;color:#fff;left:1618.27px;transform:translateX(-50%);">16</div>
<div class="t m" style="top:579.8px;font-size:14px;line-height:20px;color:#0b1220;left:1663.05px;transform:translateX(-50%);">17</div>
<div class="t m" style="top:579.8px;font-size:14px;line-height:20px;color:#0b1220;left:1707.82px;transform:translateX(-50%);">18</div>
<div class="t m" style="top:579.8px;font-size:14px;line-height:20px;color:#0b1220;left:1752.6px;transform:translateX(-50%);">19</div>
<div class="t m" style="top:619.7px;font-size:14px;line-height:20px;color:#0b1220;left:1483.95px;transform:translateX(-50%);">20</div>
<div class="t m" style="top:619.7px;font-size:14px;line-height:20px;color:#0b1220;left:1528.72px;transform:translateX(-50%);">21</div>
<div class="t m" style="top:619.7px;font-size:14px;line-height:20px;color:#0b1220;left:1573.5px;transform:translateX(-50%);">22</div>
<div class="t m" style="top:619.7px;font-size:14px;line-height:20px;color:#0b1220;left:1618.27px;transform:translateX(-50%);">23</div>
<div class="t m" style="top:619.7px;font-size:14px;line-height:20px;color:#0b1220;left:1663.05px;transform:translateX(-50%);">24</div>
<div class="t m" style="top:619.7px;font-size:14px;line-height:20px;color:#0b1220;left:1707.82px;transform:translateX(-50%);">25</div>
<div class="t m" style="top:619.7px;font-size:14px;line-height:20px;color:#0b1220;left:1752.6px;transform:translateX(-50%);">26</div>
<div class="t m" style="top:659.53px;font-size:14px;line-height:20px;color:#0b1220;left:1483.95px;transform:translateX(-50%);">27</div>
<div class="t m" style="top:659.53px;font-size:14px;line-height:20px;color:#0b1220;left:1528.72px;transform:translateX(-50%);">28</div>
<div class="t m" style="top:659.53px;font-size:14px;line-height:20px;color:#0b1220;left:1573.5px;transform:translateX(-50%);">29</div>
<div class="t m" style="top:659.53px;font-size:14px;line-height:20px;color:#0b1220;left:1618.27px;transform:translateX(-50%);">30</div>
<div class="t m" style="top:659.53px;font-size:14px;line-height:20px;color:#0b1220;left:1663.05px;transform:translateX(-50%);">31</div>
<div class="t" style="top:659.53px;font-size:14px;line-height:20px;color:#5e6e87;left:1707.82px;transform:translateX(-50%);">1</div>
<div class="t" style="top:659.53px;font-size:14px;line-height:20px;color:#5e6e87;left:1752.6px;transform:translateX(-50%);">2</div>
<div class="t m h" style="top:746.15px;font-size:18px;line-height:26px;color:#060a12;left:1449.45px;letter-spacing:-0.65px;">Ricariche SMS recenti</div>
<div class="t l" style="top:748.4px;font-size:14px;line-height:20px;color:#164e63;right:11.94px;letter-spacing:0.06px;">Mostra di più</div>
<div class="card" style="left:1449.45px;top:799.5px;width:338.55px;height:68.4px;"></div>
<div class="t m" style="top:811.4px;font-size:14px;line-height:20px;color:#0b1220;left:1469.55px;letter-spacing:-0.43px;">Farmacia Maverna</div>
<div class="t" style="top:813.05px;font-size:12px;line-height:17px;color:#5e6e87;right:32.95px;letter-spacing:0.05px;">9 set</div>
<div class="t" style="top:835.1px;font-size:14px;line-height:20px;color:#5e6e87;left:1469.55px;letter-spacing:-0.02px;">Ricarica di 2000 crediti.</div>
<div class="card" style="left:1449.45px;top:880.95px;width:338.55px;height:88.65px;"></div>
<div class="t ms" style="top:893px;font-size:13.5px;line-height:20px;color:#0b1220;left:1469.55px;letter-spacing:-0.17px;">FARMACIA COMACCHIO DI COMACCHIO</div>
<div class="t ms" style="top:913.1px;font-size:13.5px;line-height:20px;color:#0b1220;left:1469.55px;letter-spacing:-0.54px;">RUGGERO E COMACCHIO SERGIO SNC</div>
<div class="t" style="top:896.3px;font-size:12px;line-height:17px;color:#5e6e87;left:1743.9px;letter-spacing:-0.3px;">13</div>
<div class="t" style="top:912.5px;font-size:12px;line-height:17px;color:#5e6e87;left:1743.45px;letter-spacing:0.07px;">mag</div>
<div class="t" style="top:936.5px;font-size:14px;line-height:20px;color:#5e6e87;left:1469.55px;letter-spacing:-0.02px;">Ricarica di 2000 crediti.</div>
<div class="card" style="left:1449.45px;top:982.65px;width:338.55px;height:68.55px;"></div>
<div class="t m" style="top:994.55px;font-size:14px;line-height:20px;color:#0b1220;left:1469.55px;letter-spacing:-0.51px;">Farmacia Comunale 2 di Orbassano</div>
<div class="t" style="top:996.2px;font-size:12px;line-height:17px;color:#5e6e87;right:33.16px;letter-spacing:-0.16px;">7 mag</div>
<div class="t" style="top:1018.4px;font-size:14px;line-height:20px;color:#5e6e87;left:1469.55px;letter-spacing:-0.02px;">Ricarica di 2000 crediti.</div>
<div class="card" style="left:1449.45px;top:1064.4px;width:338.55px;height:68.7px;"></div>
<div class="t m" style="top:1076.3px;font-size:14px;line-height:20px;color:#0b1220;left:1469.55px;letter-spacing:-0.51px;">Farmacia Comunale 1 di Orbassano</div>
<div class="t" style="top:1077.95px;font-size:12px;line-height:17px;color:#5e6e87;right:33.16px;letter-spacing:-0.16px;">7 mag</div>
<div class="t" style="top:1100.6px;font-size:14px;line-height:20px;color:#5e6e87;left:1469.55px;letter-spacing:-0.02px;">Ricarica di 2000 crediti.</div>
<div class="abs" style="left:12.3px;top:1125px;width:95.25px;height:19.5px;background:#f5f1f0;border:1px solid #d0cccb"></div>
<div class="t" style="top:1126.75px;font-size:13.2px;line-height:19px;color:#1a1a1a;left:18.75px;letter-spacing:-0.66px;">34.120.108.165</div>
</div>
</body></html>
